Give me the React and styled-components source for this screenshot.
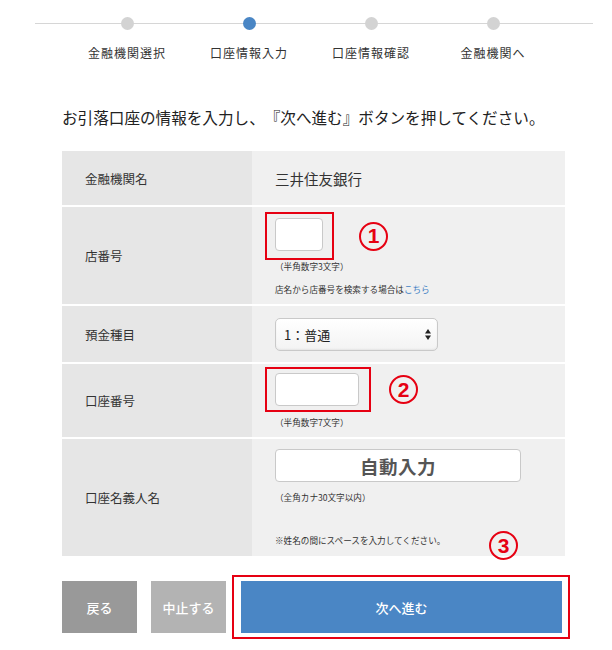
import React from "react";
import styled, { createGlobalStyle } from "styled-components";

const GlobalStyle = createGlobalStyle`
  body {
    margin: 0;
    background: #ffffff;
    font-family: "Noto Sans CJK JP", "Noto Sans", sans-serif;
    color: #333333;
    text-spacing-trim: space-all;
  }
`;

const Page = styled.div`
  width: 612px;
  padding-top: 17px;
`;

const Stepper = styled.div`
  position: relative;
  margin-left: 35px;
  width: 558px;
  padding-left: 31px;
  box-sizing: border-box;
  display: grid;
  grid-template-columns: repeat(4, 122px);

  &::before {
    content: "";
    position: absolute;
    left: 0;
    right: 0;
    top: 6px;
    height: 1px;
    background: #d6d6d6;
  }
`;

const Step = styled.div`
  position: relative;
  display: flex;
  flex-direction: column;
  align-items: center;
`;

const Dot = styled.span`
  width: 13px;
  height: 13px;
  border-radius: 50%;
  background: ${(p) => (p.$active ? "#4a86c5" : "#d3d3d3")};
`;

const StepLabel = styled.span`
  margin-top: 15px;
  font-size: 12px;
  line-height: 16px;
  letter-spacing: 1px;
  color: #333333;
`;

const Content = styled.div`
  margin-left: 62px;
  width: 503px;
`;

const Lead = styled.p`
  margin: 45px 0 23px;
  font-size: 15.6px;
  line-height: 22px;
  color: #222222;
  white-space: nowrap;
`;

const Table = styled.div`
  display: grid;
  grid-template-columns: 190px 1fr;
  grid-template-rows: 54px 97px 56px 73px 117px;
  row-gap: 2px;
  background: #ffffff;
`;

const Label = styled.div`
  background: #e6e6e6;
  display: flex;
  align-items: center;
  padding-left: 23px;
  font-size: 12.5px;
  color: #333333;
`;

const Value = styled.div`
  position: relative;
  background: #f0f0f0;
  display: flex;
  flex-direction: column;
  align-items: flex-start;
  justify-content: ${(p) => (p.$center ? "center" : "flex-start")};
  padding-left: 23px;
  padding-top: ${(p) => p.$top || 0}px;
  box-sizing: border-box;
`;

const BankName = styled.span`
  font-size: 14.5px;
  color: #333333;
`;

const AnnotRow = styled.div`
  display: flex;
  align-items: center;
`;

const Highlight = styled.div`
  display: inline-flex;
  flex-shrink: 0;
  border: 2px solid #e60012;
  padding: ${(p) => p.$pad};
  margin-left: ${(p) => p.$shift || 0}px;
`;

const TextInput = styled.div`
  width: ${(p) => p.$w}px;
  height: 33px;
  box-sizing: border-box;
  background: #ffffff;
  border: 1px solid #c9c9c9;
  border-radius: 4px;
`;

const Marker = styled.span`
  width: 29px;
  height: 29px;
  box-sizing: border-box;
  border: 2.4px solid #e60012;
  border-radius: 50%;
  color: #e60012;
  font-family: "Liberation Sans", Arial, sans-serif;
  font-weight: bold;
  font-size: 21px;
  line-height: 24px;
  display: flex;
  align-items: center;
  justify-content: center;
  margin-left: ${(p) => p.$gap || 0}px;
`;

const FloatMarker = styled(Marker)`
  position: absolute;
  left: 237px;
  top: 92px;
`;

const Note = styled.span`
  font-size: 8.6px;
  line-height: 12px;
  color: #333333;
  margin-top: ${(p) => p.$mt || 0}px;
  white-space: nowrap;
`;

const LinkText = styled.span`
  color: #3f7fc4;
`;

const SelectBox = styled.div`
  width: 163px;
  height: 33px;
  box-sizing: border-box;
  border: 1px solid #c9c9c9;
  border-radius: 5px;
  background: linear-gradient(#ffffff, #f3f3f3);
  box-shadow: inset 0 -1px 2px rgba(0, 0, 0, 0.06);
  display: flex;
  align-items: center;
  justify-content: space-between;
  padding: 0 6px 0 8px;
  font-size: 13px;
  color: #222222;
`;

const AutoBox = styled.div`
  width: 246px;
  height: 33px;
  box-sizing: border-box;
  background: #ffffff;
  border: 1px solid #c9c9c9;
  border-radius: 4px;
  display: flex;
  align-items: center;
  justify-content: center;
  font-size: 18.5px;
  font-weight: bold;
  color: #555555;
  letter-spacing: 0.5px;
`;

const Actions = styled.div`
  display: flex;
  align-items: center;
  margin-top: 19px;
`;

const Button = styled.div`
  flex-shrink: 0;
  width: ${(p) => p.$w}px;
  height: 52px;
  background: ${(p) => p.$bg};
  color: #ffffff;
  font-size: 13px;
  font-weight: 500;
  display: flex;
  align-items: center;
  justify-content: center;
  margin-right: ${(p) => p.$mr || 0}px;
`;

const Arrows = () => (
  <svg width="6" height="11" viewBox="0 0 6 11">
    <path d="M3 0 L6 4.5 L0 4.5 Z" fill="#222" />
    <path d="M3 11 L6 6.5 L0 6.5 Z" fill="#222" />
  </svg>
);

const steps = ["金融機関選択", "口座情報入力", "口座情報確認", "金融機関へ"];

const App = () => {
  return (
    <Page>
      <GlobalStyle />
      <Stepper>
        {steps.map((s, i) => (
          <Step key={s}>
            <Dot $active={i === 1} />
            <StepLabel>{s}</StepLabel>
          </Step>
        ))}
      </Stepper>

      <Content>
        <Lead>お引落口座の情報を入力し、『次へ進む』ボタンを押してください。</Lead>

        <Table>
          <Label>金融機関名</Label>
          <Value $center>
            <BankName>三井住友銀行</BankName>
          </Value>

          <Label>店番号</Label>
          <Value $top={5}>
            <AnnotRow>
              <Highlight $pad="4px 9px 7px 8px" $shift={-10}>
                <TextInput $w={48} />
              </Highlight>
              <Marker $gap={25}>1</Marker>
            </AnnotRow>
            <Note>（半角数字3文字）</Note>
            <Note $mt={11}>
              店名から店番号を検索する場合は<LinkText>こちら</LinkText>
            </Note>
          </Value>

          <Label>預金種目</Label>
          <Value $center>
            <SelectBox>
              <span>1：普通</span>
              <Arrows />
            </SelectBox>
          </Value>

          <Label>口座番号</Label>
          <Value $top={3}>
            <AnnotRow>
              <Highlight $pad="4px 10px 4px 8px" $shift={-10}>
                <TextInput $w={84} />
              </Highlight>
              <Marker $gap={18}>2</Marker>
            </AnnotRow>
            <Note $mt={4}>（半角数字7文字）</Note>
          </Value>

          <Label>口座名義人名</Label>
          <Value $top={10}>
            <AutoBox>自動入力</AutoBox>
            <Note $mt={9}>（全角カナ30文字以内）</Note>
            <Note $mt={31}>※姓名の間にスペースを入力してください。</Note>
            <FloatMarker>3</FloatMarker>
          </Value>
        </Table>

        <Actions>
          <Button $w={75} $bg="#999999" $mr={14}>
            戻る
          </Button>
          <Button $w={75} $bg="#b3b3b3" $mr={6}>
            中止する
          </Button>
          <Highlight $pad="4px 6px 4px 7px">
            <Button $w={321} $bg="#4a86c5">
              次へ進む
            </Button>
          </Highlight>
        </Actions>
      </Content>
    </Page>
  );
};

export default App;
